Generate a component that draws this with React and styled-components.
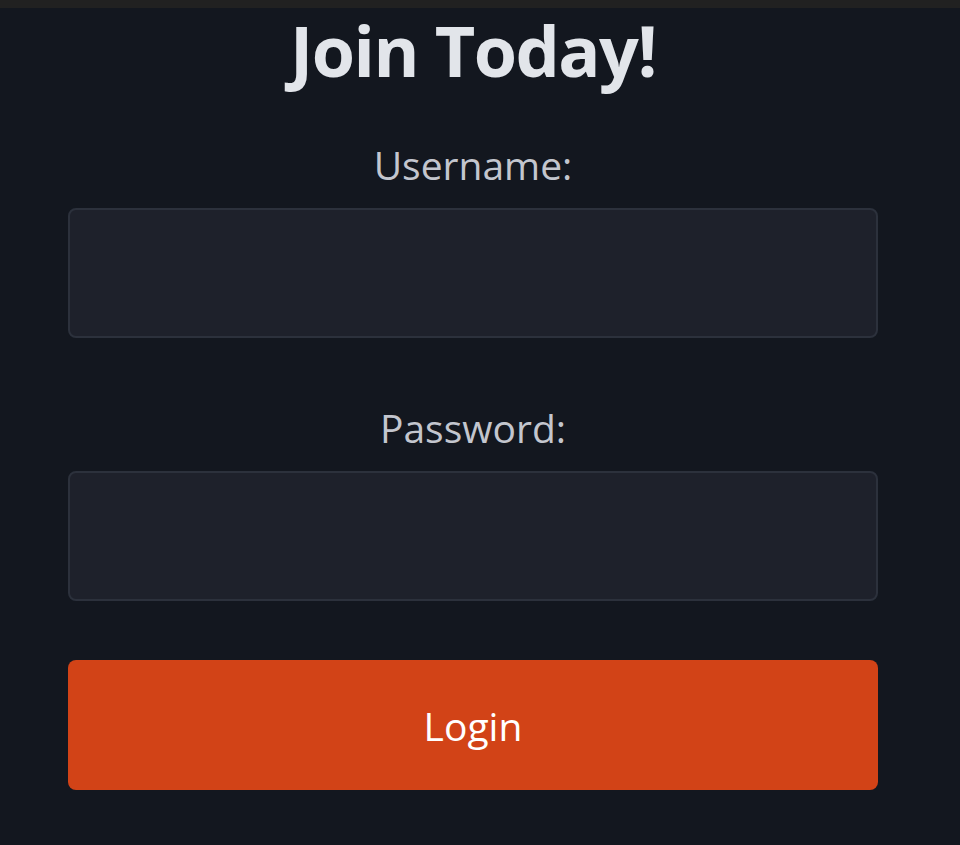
import React from 'react';
import styled, { createGlobalStyle } from 'styled-components';

const GlobalStyle = createGlobalStyle`
  html, body {
    margin: 0;
    padding: 0;
    background: #13171f;
  }
  body {
    font-family: "Open Sans", "Noto Sans", sans-serif;
  }
`;

const TopBar = styled.div`
  height: 8px;
  background: #212121;
`;

const Page = styled.div`
  min-height: 837px;
  background: #13171f;
  padding: 0 82px 0 68px;
`;

const Form = styled.form`
  display: flex;
  flex-direction: column;
  align-items: stretch;
`;

const Title = styled.h1`
  margin: 0;
  height: 84px;
  line-height: 84px;
  text-align: center;
  font-size: 70px;
  font-weight: 700;
  letter-spacing: -1.5px;
  color: #e2e5ea;
`;

const Label = styled.label`
  display: block;
  text-align: center;
  font-size: 39px;
  line-height: 50px;
  color: #c3c6ce;
  margin-top: ${(p) => p.$top}px;
  margin-bottom: 18px;
`;

const Input = styled.input`
  box-sizing: border-box;
  height: 130px;
  width: 100%;
  background: #1e212b;
  border: 2px solid #2c313c;
  border-radius: 8px;
  outline: none;
  color: #e2e5ea;
  font-size: 36px;
  padding: 0 20px;
`;

const Button = styled.button`
  margin-top: 59px;
  height: 130px;
  width: 100%;
  border: none;
  border-radius: 8px;
  background: #d24317;
  color: #ffffff;
  font-family: inherit;
  font-size: 39px;
  cursor: pointer;
`;

export default function App() {
  return (
    <>
      <GlobalStyle />
      <TopBar />
      <Page>
        <Form onSubmit={(e) => e.preventDefault()}>
          <Title>Join Today!</Title>
          <Label $top={48}>Username:</Label>
          <Input type="text" />
          <Label $top={65}>Password:</Label>
          <Input type="password" />
          <Button type="submit">Login</Button>
        </Form>
      </Page>
    </>
  );
}
